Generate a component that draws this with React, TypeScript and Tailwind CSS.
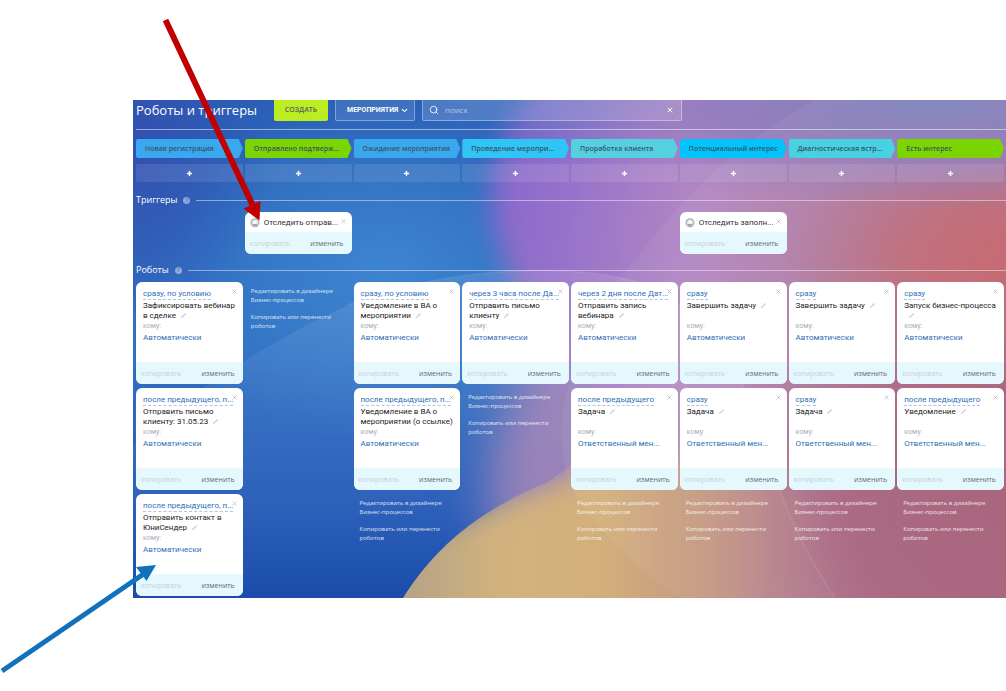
import React from "react";
import { ChevronDown, Plus, Search, X } from "lucide-react";

type Robot = {
  time: string;
  title: string;
  to: string;
  pencil?: boolean;
};

type Stage = {
  name: string;
  color: string;
  trigger?: string;
  robots: Robot[];
  links: boolean;
};

const AUTO = "Автоматически";
const MANAGER = "Ответственный мен...";

const stages: Stage[] = [
  {
    name: "Новая регистрация",
    color: "bg-[#39a8ef]",
    robots: [
      { time: "сразу, по условию", title: "Зафиксировать вебинар в сделке", to: AUTO },
      { time: "после предыдущего, п...", title: "Отправить письмо клиенту: 31.05.23", to: AUTO },
      { time: "после предыдущего, п...", title: "Отправить контакт в ЮниСендер", to: AUTO },
    ],
    links: false,
  },
  {
    name: "Отправлено подтверж...",
    color: "bg-[#7bd500]",
    trigger: "Отследить отправ...",
    robots: [],
    links: true,
  },
  {
    name: "Ожидание мероприятия",
    color: "bg-[#39a8ef]",
    robots: [
      { time: "сразу, по условию", title: "Уведомление в ВА о мероприятии", to: AUTO },
      {
        time: "после предыдущего, п...",
        title: "Уведомление в ВА о мероприятии (о ссылке)",
        to: AUTO,
        pencil: false,
      },
    ],
    links: true,
  },
  {
    name: "Проведение меропри...",
    color: "bg-[#2fc6f6]",
    robots: [{ time: "через 3 часа после Да...", title: "Отправить письмо клиенту", to: AUTO }],
    links: true,
  },
  {
    name: "Проработка клиента",
    color: "bg-[#55d0e0]",
    robots: [
      { time: "через 2 дня после Дат...", title: "Отправить запись вебинара", to: AUTO },
      { time: "после предыдущего", title: "Задача", to: MANAGER },
    ],
    links: true,
  },
  {
    name: "Потенциальный интерес",
    color: "bg-[#00c4fb]",
    trigger: "Отследить заполн...",
    robots: [
      { time: "сразу", title: "Завершить задачу", to: AUTO },
      { time: "сразу", title: "Задача", to: MANAGER },
    ],
    links: true,
  },
  {
    name: "Диагностическая встр...",
    color: "bg-[#47d1e2]",
    robots: [
      { time: "сразу", title: "Завершить задачу", to: AUTO },
      { time: "сразу", title: "Задача", to: MANAGER },
    ],
    links: true,
  },
  {
    name: "Есть интерес",
    color: "bg-[#7bd500]",
    robots: [
      { time: "сразу", title: "Запуск бизнес-процесса", to: AUTO },
      { time: "после предыдущего", title: "Уведомление", to: MANAGER },
    ],
    links: true,
  },
];

function Wallpaper() {
  return (
    <svg
      className="absolute inset-0 h-full w-full"
      viewBox="0 0 873 498"
      preserveAspectRatio="none"
      aria-hidden="true"
    >
      <defs>
        <linearGradient id="base" x1="0" y1="0" x2="0" y2="1">
          <stop offset="0" stopColor="#2a60b6" />
          <stop offset="0.45" stopColor="#3172c4" />
          <stop offset="0.8" stopColor="#2a5fba" />
          <stop offset="1" stopColor="#1648a9" />
        </linearGradient>
        <radialGradient id="glow">
          <stop offset="0" stopColor="#3d84cf" />
          <stop offset="1" stopColor="#3d84cf" stopOpacity="0" />
        </radialGradient>
        <radialGradient id="corner">
          <stop offset="0" stopColor="#3350b0" />
          <stop offset="1" stopColor="#3350b0" stopOpacity="0" />
        </radialGradient>
        <linearGradient id="side" gradientUnits="userSpaceOnUse" x1="350" y1="0" x2="873" y2="60">
          <stop offset="0" stopColor="#8565cb" />
          <stop offset="0.15" stopColor="#946fcb" />
          <stop offset="0.42" stopColor="#b186c3" />
          <stop offset="0.7" stopColor="#b07b9f" />
          <stop offset="1" stopColor="#b0677f" />
        </linearGradient>
        <radialGradient id="red">
          <stop offset="0" stopColor="#c4646b" />
          <stop offset="0.4" stopColor="#c3676f" stopOpacity="0.8" />
          <stop offset="1" stopColor="#bd6b7c" stopOpacity="0" />
        </radialGradient>
        <radialGradient id="sky">
          <stop offset="0" stopColor="#7d83be" />
          <stop offset="0.55" stopColor="#8d7cc0" stopOpacity="0.75" />
          <stop offset="1" stopColor="#947cc2" stopOpacity="0" />
        </radialGradient>
        <radialGradient id="plum">
          <stop offset="0" stopColor="#a45f79" />
          <stop offset="0.5" stopColor="#a55f7a" stopOpacity="0.85" />
          <stop offset="1" stopColor="#a8647d" stopOpacity="0" />
        </radialGradient>
        <linearGradient id="sand" gradientUnits="userSpaceOnUse" x1="270" y1="0" x2="740" y2="0">
          <stop offset="0" stopColor="#b3a184" />
          <stop offset="0.2" stopColor="#d0b07b" />
          <stop offset="0.42" stopColor="#d2ae78" />
          <stop offset="0.7" stopColor="#bf8f82" />
          <stop offset="1" stopColor="#a9677f" stopOpacity="0" />
        </linearGradient>
        <linearGradient id="ring" gradientUnits="userSpaceOnUse" x1="0" y1="165" x2="0" y2="380">
          <stop offset="0" stopColor="#fff" stopOpacity="0.1" />
          <stop offset="1" stopColor="#fff" stopOpacity="0.02" />
        </linearGradient>
        <filter id="soft" x="-20%" y="-20%" width="140%" height="140%">
          <feGaussianBlur stdDeviation="13" />
        </filter>
        <filter id="softer" x="-30%" y="-30%" width="160%" height="160%">
          <feGaussianBlur stdDeviation="24" />
        </filter>
        <clipPath id="dune">
          <path d="M270 498 C310 435 360 405 415 382 C460 350 520 300 600 250 L873 250 L873 498 Z" />
        </clipPath>
      </defs>
      <rect width="873" height="498" fill="url(#base)" />
      <ellipse cx="250" cy="170" rx="230" ry="170" fill="url(#glow)" />
      <ellipse cx="0" cy="40" rx="140" ry="200" fill="url(#corner)" />
      <path
        d="M400 140 L900 140 L900 560 L420 560 C340 450 340 350 385 290 Z"
        fill="#9680b8"
        filter="url(#softer)"
      />
      <path
        d="M420 -40 C330 60 350 150 405 205 C470 270 480 360 560 540 L920 540 L920 -40 Z"
        fill="url(#side)"
        filter="url(#soft)"
      />
      <ellipse cx="400" cy="-20" rx="110" ry="60" fill="#3a6fc4" opacity="0.45" filter="url(#softer)" />
      <ellipse cx="883" cy="160" rx="230" ry="120" fill="url(#red)" />
      <ellipse cx="800" cy="0" rx="420" ry="110" fill="url(#sky)" />
      <ellipse cx="883" cy="410" rx="320" ry="240" fill="url(#plum)" />
      <g clipPath="url(#dune)">
        <path
          d="M200 560 L250 450 C340 410 390 395 430 380 C480 345 560 345 640 355 L780 560 Z"
          fill="url(#sand)"
          filter="url(#soft)"
        />
      </g>
      <path
        d="M682 0 C575 60 530 125 482 185 C425 270 415 350 445 400 C480 450 520 480 548 498 L873 498 L873 0 Z"
        fill="#fff"
        opacity="0.05"
      />
      <path
        d="M0 345 C60 290 130 245 215 205 C320 165 440 162 510 184 C590 220 615 290 630 340 C645 395 670 450 702 498 L0 498 Z"
        fill="url(#ring)"
      />
      <path
        d="M215 205 C320 165 440 162 510 184 C590 220 615 290 630 340 C645 395 670 450 702 498"
        fill="none"
        stroke="#fff"
        strokeOpacity="0.08"
        strokeWidth="2"
      />
    </svg>
  );
}

function CardActions() {
  return (
    <div className="flex h-[22px] items-center justify-between bg-[#e5f8fe] pt-px pr-2 pl-[5px] text-[7px] leading-3">
      <button className="text-[#c3d3da]">копировать</button>
      <button className="text-[#5f6c73]">изменить</button>
    </div>
  );
}

function CloseButton() {
  return (
    <button aria-label="Удалить" className="absolute top-[6px] right-[5px] text-[#a0a5aa]">
      <X size={7} strokeWidth={2} />
    </button>
  );
}

function RobotCard({ robot }: { robot: Robot }) {
  return (
    <div className="relative flex h-[102px] flex-col overflow-hidden rounded-md bg-white">
      <CloseButton />
      <div className="flex-1 pt-[6px] pr-1 pl-[7px] font-[Roboto,'Open_Sans',sans-serif] text-[8px] whitespace-nowrap">
        <a
          href="#time"
          className="inline-block border-b border-dashed border-[#a9c6e6] align-top leading-[11px] text-[#2f6eb7]"
        >
          {robot.time}
        </a>
        <div className="mt-px min-h-[20px] leading-[10px] whitespace-normal text-[#222]">
          {robot.title}
          {robot.pencil !== false && (
            <svg width="7" height="7" viewBox="0 0 7 7" className="ml-1 inline" aria-hidden="true">
              <path d="M0.800 6.200 L1.300 4.700 L5.200 0.900 L6.200 1.900 L2.300 5.700 Z" fill="#d0d3d6" />
            </svg>
          )}
        </div>
        <div className="text-[7px] leading-[11px] text-[#a8adb4]">кому:</div>
        <a href="#to" className="block leading-3 text-[#2f6eb7]">
          {robot.to}
        </a>
      </div>
      <CardActions />
    </div>
  );
}

function TriggerCard({ title }: { title: string }) {
  return (
    <div className="relative overflow-hidden rounded-md bg-white">
      <CloseButton />
      <div className="flex h-[20px] items-center gap-1 pt-[2px] pl-[5px] font-[Roboto,'Open_Sans',sans-serif] text-[8px] whitespace-nowrap text-[#333]">
        <svg width="10" height="10" viewBox="0 0 10 10" aria-hidden="true">
          <circle cx="5" cy="4.800" r="3.900" fill="#dfe2e5" stroke="#a9adb3" strokeWidth="1.200" />
          <circle cx="5" cy="4" r="1.700" fill="#fff" />
          <path d="M3 6.200 H7 V7.400 H3 Z" fill="#858b92" />
        </svg>
        <span>{title}</span>
      </div>
      <CardActions />
    </div>
  );
}

function SectionTitle({ text }: { text: string }) {
  return (
    <div className="flex h-3 items-center gap-[6px]">
      <h2 className="text-[9px] leading-3 text-white">{text}</h2>
      <button
        aria-label="Справка"
        className="flex h-[7px] w-[7px] items-center justify-center rounded-full bg-white/45 text-[6px] leading-none text-[#3a62ad]"
      >
        ?
      </button>
      <div className="h-px flex-1 bg-white/45" />
    </div>
  );
}

function DesignerLinks() {
  return (
    <div className="flex flex-col gap-2 pt-[5px] pl-[6px] text-[6px] leading-[9px] text-white/80">
      <a href="#designer">
        Редактировать в дизайнере
        <br />
        Бизнес-процессов
      </a>
      <a href="#copy">
        Копировать или перенести
        <br />
        роботов
      </a>
    </div>
  );
}

function Arrows() {
  return (
    <svg
      className="pointer-events-none absolute top-0 left-0 z-10"
      width="280"
      height="691"
      viewBox="0 0 280 691"
      aria-hidden="true"
    >
      <path d="M165.500 20 L253 206" stroke="#c00000" strokeWidth="6" />
      <path d="M259.500 220.500 L243.500 208.500 L260.500 201 Z" fill="#c00000" />
      <path d="M2 671 L145 573" stroke="#1072bd" strokeWidth="5" />
      <path d="M156 565 L146.500 581 L136 567 Z" fill="#1072bd" />
    </svg>
  );
}

export default function App() {
  return (
    <div className="relative min-h-screen bg-white pt-[100px] pl-[133px] font-['Open_Sans','Noto_Sans',sans-serif]">
      <main className="relative overflow-hidden">
        <Wallpaper />
        <div className="relative pb-[2px] pl-[3px]">
          <header className="flex h-[21px] items-start">
            <h1 className="w-[138px] text-[13px] leading-[21px] whitespace-nowrap text-white">
              Роботы и триггеры
            </h1>
            <button className="h-[21px] w-[54px] rounded-b-xs bg-[#bbed21] text-[7px] font-semibold text-[#535c69]">
              СОЗДАТЬ
            </button>
            <div className="relative ml-[7px] h-[21px] w-[80px] rounded-b-xs border border-t-0 border-white/35 bg-white/10">
              <select
                aria-label="Воронка"
                className="block h-5 w-full appearance-none bg-transparent pl-[11px] font-[Roboto,'Open_Sans',sans-serif] text-[7px] leading-5 font-bold text-white outline-none"
              >
                <option>МЕРОПРИЯТИЯ</option>
              </select>
              <ChevronDown
                size={9}
                strokeWidth={3}
                className="pointer-events-none absolute top-[6px] right-[5px] text-white"
              />
            </div>
            <label className="ml-[7px] flex h-[21px] w-[260px] items-center rounded-b-xs border border-t-0 border-white/35 bg-white/15 px-[6px] text-white">
              <Search size={10} strokeWidth={2} />
              <input
                type="text"
                placeholder="поиск"
                className="ml-[6px] min-w-0 flex-1 bg-transparent text-[8px] outline-none placeholder:text-white/60"
              />
              <button aria-label="Очистить" className="mr-px">
                <X size={8} strokeWidth={3} />
              </button>
            </label>
          </header>
          <div className="mt-2 h-px bg-white/50" />

          <div className="mt-[9px] grid grid-cols-8 gap-[2px] pr-[2px]">
            {stages.map((stage) => (
              <div
                key={stage.name}
                className={`h-[19px] rounded-l-xs pl-[9px] text-[7px] leading-[19px] font-semibold whitespace-nowrap text-[#3c5368] [clip-path:polygon(0_0,calc(100%-4px)_0,100%_50%,calc(100%-4px)_100%,0_100%)] ${stage.color}`}
              >
                {stage.name}
              </div>
            ))}
          </div>

          <div className="mt-[6px] grid grid-cols-8 gap-[2px] pr-[2px]">
            {stages.map((stage) => (
              <button
                key={stage.name}
                aria-label={`Добавить: ${stage.name}`}
                className="flex h-[18px] items-center justify-center rounded-xs bg-white/10 text-white"
              >
                <Plus size={7} strokeWidth={5} />
              </button>
            ))}
          </div>

          <div className="mt-3">
            <SectionTitle text="Триггеры" />
          </div>
          <div className="mt-[6px] grid grid-cols-8 gap-[2px] pr-[2px]">
            {stages.map((stage) => (
              <div key={stage.name}>{stage.trigger && <TriggerCard title={stage.trigger} />}</div>
            ))}
          </div>

          <div className="mt-[10px]">
            <SectionTitle text="Роботы" />
          </div>
          <div className="mt-[6px] grid grid-cols-8 gap-[2px] pr-[2px]">
            {stages.map((stage) => (
              <div key={stage.name} className="flex min-w-0 flex-col gap-1">
                {stage.robots.map((robot, i) => (
                  <RobotCard key={i} robot={robot} />
                ))}
                {stage.links && <DesignerLinks />}
              </div>
            ))}
          </div>
        </div>
      </main>
      <Arrows />
    </div>
  );
}
